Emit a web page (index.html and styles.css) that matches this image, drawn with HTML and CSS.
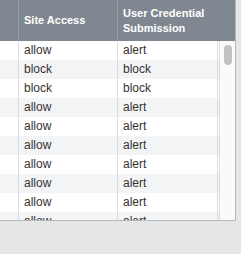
FILE: index.html
```html
<!DOCTYPE html>
<html lang="en">
<head>
    <meta charset="UTF-8">
    <title>Policy Table</title>
    <link rel="stylesheet" href="styles.css">
</head>
<body>
    <div class="grid">
        <div class="head">
            <div class="cell first"></div>
            <div class="cell access">Site Access</div>
            <div class="cell cred">User Credential<br>Submission</div>
        </div>
        <div class="body">
            <div class="rows">
                <div class="row"><div class="cell first"></div><div class="cell access">allow</div><div class="cell cred">alert</div></div>
                <div class="row"><div class="cell first"></div><div class="cell access">block</div><div class="cell cred">block</div></div>
                <div class="row"><div class="cell first"></div><div class="cell access">block</div><div class="cell cred">block</div></div>
                <div class="row"><div class="cell first"></div><div class="cell access">allow</div><div class="cell cred">alert</div></div>
                <div class="row"><div class="cell first"></div><div class="cell access">allow</div><div class="cell cred">alert</div></div>
                <div class="row"><div class="cell first"></div><div class="cell access">allow</div><div class="cell cred">alert</div></div>
                <div class="row"><div class="cell first"></div><div class="cell access">allow</div><div class="cell cred">alert</div></div>
                <div class="row"><div class="cell first"></div><div class="cell access">allow</div><div class="cell cred">alert</div></div>
                <div class="row"><div class="cell first"></div><div class="cell access">allow</div><div class="cell cred">alert</div></div>
                <div class="row"><div class="cell first"></div><div class="cell access">allow</div><div class="cell cred">alert</div></div>
            </div>
            <div class="scroll">
                <div class="thumb"></div>
            </div>
        </div>
    </div>
</body>
</html>
```

FILE: styles.css
```css
body {
    margin: 0;
    background: #e6e6e6;
    font-family: 'Liberation Sans', Arial, sans-serif;
    font-size: 12px;
    color: #333;
}

.grid {
    width: 235px;
    border-right: 1px solid #b4b8bc;
    border-bottom: 1px solid #b4b8bc;
    background: #fff;
}

.head {
    display: flex;
    height: 41px;
    background: #7f8891;
    color: #fff;
    font-weight: bold;
    font-size: 11px;
    line-height: 15px;
}

.head .cell {
    display: flex;
    align-items: center;
    border-right: 1px solid #959da5;
}

.head .cred {
    border-right: none;
}

.cell {
    box-sizing: border-box;
    padding-left: 5px;
    border-right: 1px solid #dcdde0;
}

.first {
    width: 19px;
    padding: 0;
}

.access {
    width: 99px;
}

.cred {
    width: 100px;
}

.body {
    display: flex;
    height: 179px;
}

.rows {
    width: 219px;
    overflow: hidden;
}

.row {
    display: flex;
    height: 19px;
    line-height: 19px;
}

.row:nth-child(even) {
    background: #f3f4f5;
}

.scroll {
    width: 16px;
    box-sizing: border-box;
    border-left: 1px solid #dcdde0;
    background: #fafafa;
    padding: 4px 0 0 4px;
}

.thumb {
    width: 8px;
    height: 20px;
    border-radius: 4px;
    background: #c2c2c2;
}
```
